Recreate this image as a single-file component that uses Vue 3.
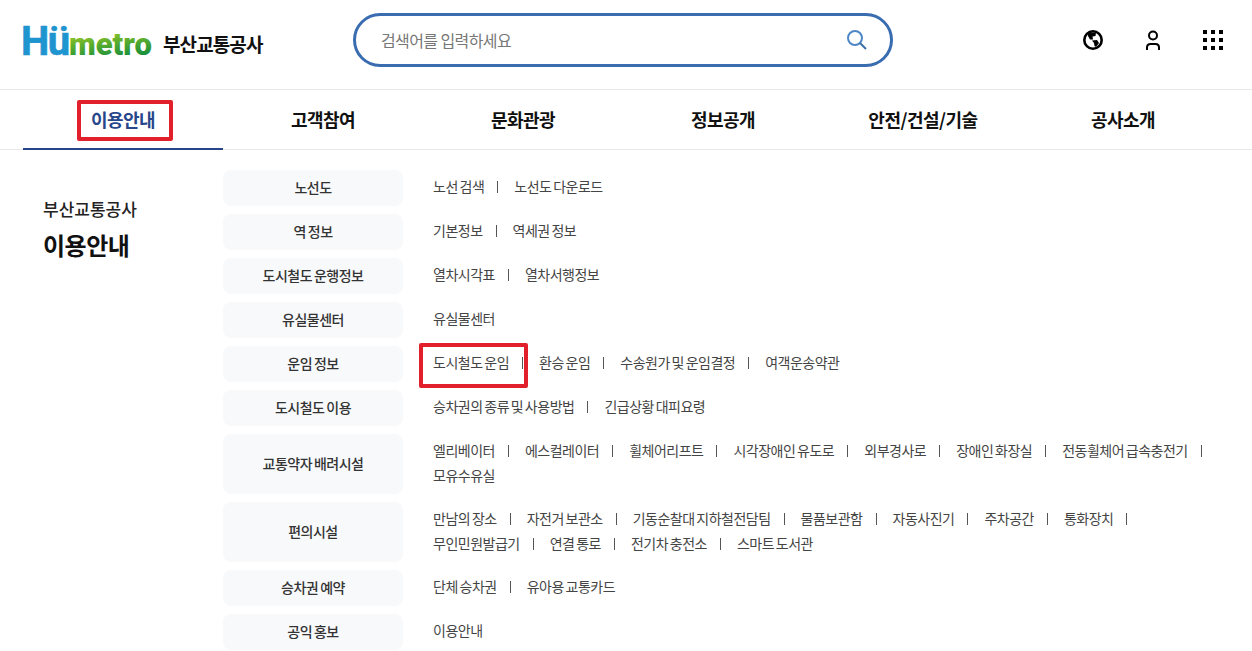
<script setup>
const tabs = ['이용안내', '고객참여', '문화관광', '정보공개', '안전/건설/기술', '공사소개']

const rows = [
  { title: '노선도', links: ['노선 검색', '노선도 다운로드'] },
  { title: '역 정보', links: ['기본정보', '역세권 정보'] },
  { title: '도시철도 운행정보', links: ['열차시각표', '열차서행정보'] },
  { title: '유실물센터', links: ['유실물센터'] },
  { title: '운임 정보', links: ['도시철도 운임', '환승 운임', '수송원가 및 운임결정', '여객운송약관'] },
  { title: '도시철도 이용', links: ['승차권의 종류 및 사용방법', '긴급상황 대피요령'] },
  {
    title: '교통약자 배려시설',
    links: ['엘리베이터', '에스컬레이터', '휠체어리프트', '시각장애인 유도로', '외부경사로', '장애인 화장실', '전동휠체어 급속충전기', '모유수유실']
  },
  {
    title: '편의시설',
    links: ['만남의 장소', '자전거 보관소', '기동순찰대 지하철전담팀', '물품보관함', '자동사진기', '주차공간', '통화장치', '무인민원발급기', '연결 통로', '전기차 충전소', '스마트 도서관']
  },
  { title: '승차권 예약', links: ['단체 승차권', '유아용 교통카드'] },
  { title: '공익 홍보', links: ['이용안내'] }
]
</script>

<template>
  <div class="page">
    <header class="top">
      <div class="brand">
        <svg class="logo" width="136" height="60" viewBox="0 0 136 60">
          <defs>
            <linearGradient id="metroFill" x1="0" y1="0" x2="0.25" y2="1">
              <stop offset="0" stop-color="#c6dc2c" />
              <stop offset="0.5" stop-color="#62b02c" />
              <stop offset="1" stop-color="#0e8a3e" />
            </linearGradient>
          </defs>
          <text x="1" y="45" class="logo-hu">Hü</text>
          <text x="49" y="45" class="logo-metro" fill="url(#metroFill)">metro</text>
        </svg>
        <span class="brand-name">부산교통공사</span>
      </div>
      <div class="search">
        <span class="search-text">검색어를 입력하세요</span>
        <svg class="search-icon" width="24" height="24" viewBox="0 0 24 24" fill="none">
          <circle cx="12" cy="10" r="7" stroke="#4f86c6" stroke-width="2" />
          <path d="M17 15l6 6" stroke="#3a6ea5" stroke-width="2" />
        </svg>
      </div>
      <div class="tools">
        <svg width="20" height="20" viewBox="0 0 20 20">
          <circle cx="10" cy="10" r="8.700" fill="#fff" stroke="#000" stroke-width="2.600" />
          <path d="M5 2.500h8l-.5 3.500-3 .5.5 3-3 0-2-3.500zM9 10.500l5-.5 2 3-3 4-1.500-1-.5-3z" fill="#000" />
        </svg>
        <svg width="16" height="20" viewBox="0 0 16 20" fill="none" stroke="#000" stroke-width="2">
          <circle cx="8" cy="5.500" r="4" />
          <path d="M2 20v-2.500q0-3.500 3.500-3.500h5q3.500 0 3.500 3.500v2.500" />
        </svg>
        <div class="dots">
          <i v-for="n in 9" :key="n"></i>
        </div>
      </div>
    </header>

    <nav class="tabs">
      <div v-for="(tab, i) in tabs" :key="tab" class="tab" :class="{ active: i === 0 }">
        <span class="tab-label">{{ tab }}<span v-if="i === 0" class="mark mark-tab"></span></span>
      </div>
    </nav>

    <main class="body">
      <aside class="side">
        <div class="side-sub">부산교통공사</div>
        <div class="side-title">이용안내</div>
      </aside>
      <div class="rows">
        <div v-for="row in rows" :key="row.title" class="row">
          <div class="row-title">{{ row.title }}</div>
          <ul class="links">
            <li v-for="link in row.links" :key="link" class="link">
              {{ link }}<span v-if="link === '도시철도 운임'" class="mark mark-link"></span>
            </li>
          </ul>
        </div>
      </div>
    </main>
  </div>
</template>

<style>
html, body {
  margin: 0;
  background: #fff;
  overflow: hidden;
}
</style>

<style scoped>
.page {
  width: 1252px;
  height: 651px;
  overflow: hidden;
  font-family: "Noto Sans CJK KR", "Noto Sans", sans-serif;
  color: #111;
}
.top {
  height: 80px;
  padding: 0 0 9px 23px;
  border-bottom: 1px solid #e8e8e8;
  display: flex;
  align-items: center;
}
.brand {
  width: 330px;
  flex: none;
  display: flex;
  align-items: center;
  gap: 7px;
}
.logo {
  flex: none;
  margin: -10px 0 -10px -3px;
}
.logo-hu {
  font-family: Roboto, sans-serif;
  font-size: 40px;
  font-weight: 700;
  letter-spacing: -1.5px;
  fill: #1f95d0;
  stroke: #1f95d0;
  stroke-width: 0.6px;
  stroke-linejoin: round;
}
.logo-metro {
  font-family: Roboto, sans-serif;
  font-size: 31px;
  font-weight: 900;
}
.brand-name {
  margin-top: 6px;
  font-size: 19px;
  font-weight: 700;
  letter-spacing: -0.9px;
  color: #111;
}
.search {
  width: 540px;
  height: 54px;
  flex: none;
  box-sizing: border-box;
  border: 3px solid #3a6cb0;
  border-radius: 27px;
  display: flex;
  align-items: center;
  justify-content: space-between;
  padding: 0 23px 0 25px;
}
.search-text {
  font-size: 16px;
  letter-spacing: -0.6px;
  color: #777;
}
.tools {
  margin-left: auto;
  width: 140px;
  margin-right: 29px;
  display: flex;
  align-items: center;
  justify-content: space-between;
}
.dots {
  display: grid;
  grid-template-columns: repeat(3, 4px);
  gap: 4px;
}
.dots i {
  width: 4px;
  height: 4px;
  background: #000;
}
.tabs {
  height: 60px;
  box-sizing: border-box;
  border-bottom: 1px solid #e8e8e8;
  display: flex;
  padding-left: 23px;
}
.tab {
  width: 200px;
  height: 60px;
  box-sizing: border-box;
  border-bottom: 2px solid transparent;
  display: flex;
  align-items: center;
  justify-content: center;
  font-size: 18px;
  font-weight: 700;
  letter-spacing: -0.5px;
  color: #111;
}
.tab-label {
  position: relative;
}
.tab.active {
  color: #27468a;
  border-bottom-color: #27468a;
}
.mark {
  position: absolute;
  box-sizing: border-box;
  border: 4px solid #e1202c;
  border-radius: 2px;
}
.mark-tab {
  left: -14px;
  right: -18px;
  top: -6px;
  bottom: -9px;
}
.mark-link {
  left: -14px;
  top: -7px;
  width: 109px;
  height: 45px;
}
.body {
  display: flex;
  padding: 20px 0 0 43px;
}
.side {
  width: 180px;
  padding-top: 26px;
}
.side-sub {
  font-size: 17px;
  font-weight: 500;
  color: #222;
}
.side-title {
  margin-top: 6px;
  font-size: 24px;
  font-weight: 700;
  letter-spacing: -0.5px;
  color: #111;
}
.rows {
  width: 1000px;
  display: flex;
  flex-direction: column;
  gap: 8px;
}
.row {
  display: flex;
  gap: 30px;
}
.row-title {
  width: 180px;
  flex: none;
  min-height: 36px;
  box-sizing: border-box;
  padding-bottom: 2px;
  border-radius: 8px;
  background: #f8f9fb;
  display: flex;
  align-items: center;
  justify-content: center;
  font-size: 14px;
  font-weight: 500;
  letter-spacing: -0.5px;
  word-spacing: -0.7px;
  color: #333;
}
.links {
  list-style: none;
  margin: 0;
  padding: 4px 0 6px;
  flex: 1;
  display: flex;
  flex-wrap: wrap;
  align-content: flex-start;
  font-size: 14px;
  letter-spacing: -0.5px;
  word-spacing: -0.9px;
  line-height: 25px;
  color: #444;
}
.link {
  position: relative;
  padding-right: 30px;
}
.link:not(:last-child)::after {
  content: "";
  position: absolute;
  right: 16px;
  top: 7px;
  width: 1px;
  height: 12px;
  background: #555;
}
</style>
